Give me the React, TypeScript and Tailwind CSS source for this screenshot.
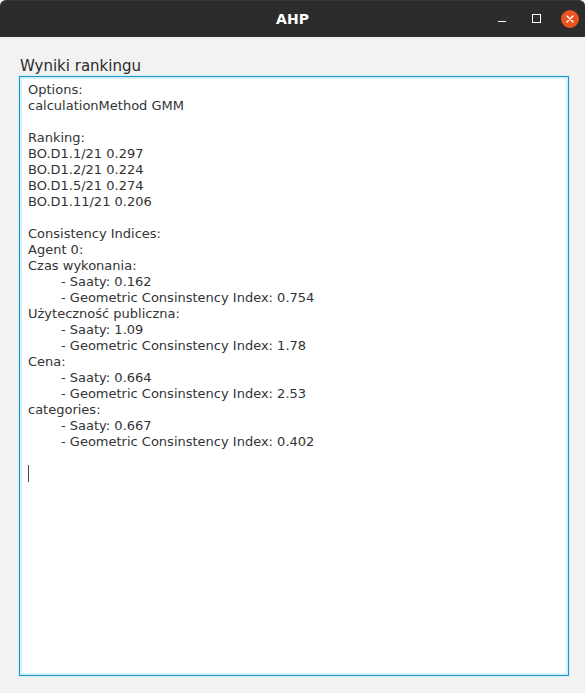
import React from "react";

const lines: { text: string; indent?: boolean }[] = [
  { text: "Options:" },
  { text: "calculationMethod GMM" },
  { text: "" },
  { text: "Ranking:" },
  { text: "BO.D1.1/21 0.297" },
  { text: "BO.D1.2/21 0.224" },
  { text: "BO.D1.5/21 0.274" },
  { text: "BO.D1.11/21 0.206" },
  { text: "" },
  { text: "Consistency Indices:" },
  { text: "Agent 0:" },
  { text: "Czas wykonania:" },
  { text: "- Saaty: 0.162", indent: true },
  { text: "- Geometric Consinstency Index: 0.754", indent: true },
  { text: "Użyteczność publiczna:" },
  { text: "- Saaty: 1.09", indent: true },
  { text: "- Geometric Consinstency Index: 1.78", indent: true },
  { text: "Cena:" },
  { text: "- Saaty: 0.664", indent: true },
  { text: "- Geometric Consinstency Index: 2.53", indent: true },
  { text: "categories:" },
  { text: "- Saaty: 0.667", indent: true },
  { text: "- Geometric Consinstency Index: 0.402", indent: true },
  { text: "" },
];

const App = () => {
  return (
    <div className="w-[585px] h-[693px] flex flex-col bg-[#f2f2f2] font-['DejaVu_Sans',sans-serif] overflow-hidden">
      {/* title bar */}
      <div className="h-[37px] bg-[#2c2c2c] border-t border-[#3a3a3a] rounded-t-[6px] flex items-center relative shrink-0">
        <div className="flex-1 text-center text-white font-bold text-[14px]">
          AHP
        </div>
        <div className="absolute right-[6px] top-0 h-[36px] flex items-center">
          <div className="w-[8px] h-[1.5px] bg-white mt-[5px]" />
          <div className="w-[9px] h-[9px] border-[1.5px] border-white ml-[26px] mt-[-1px]" />
          <div className="w-[18px] h-[18px] rounded-full bg-[#e95420] flex items-center justify-center ml-[20px]">
            <svg width="8" height="8" viewBox="0 0 8 8">
              <path
                d="M1 1 L7 7 M7 1 L1 7"
                stroke="white"
                strokeWidth="1.4"
                strokeLinecap="round"
              />
            </svg>
          </div>
        </div>
      </div>

      <div className="flex flex-col px-[19px] pt-[20px]">
        <p className="text-[15px] leading-[18px] text-[#2b2b2b] pl-[1px] mb-px">
          Wyniki rankingu
        </p>
        <div className="h-[600px] w-[550px] bg-white border border-[#1596cc] shadow-[inset_0_0_0_2px_#d6eff9,0_0_0_1px_#d9eef7] px-[8px] pt-[5px] text-[13px] leading-[16px] text-[#333333]">
          {lines.map((l, i) => (
            <div key={i} className={`h-[16px] whitespace-pre ${l.indent ? "pl-[33px]" : ""}`}>
              {l.text}
            </div>
          ))}
          <div className="w-px h-[17px] bg-[#444] mt-[-1px]" />
        </div>
      </div>
    </div>
  );
};

export default App;
